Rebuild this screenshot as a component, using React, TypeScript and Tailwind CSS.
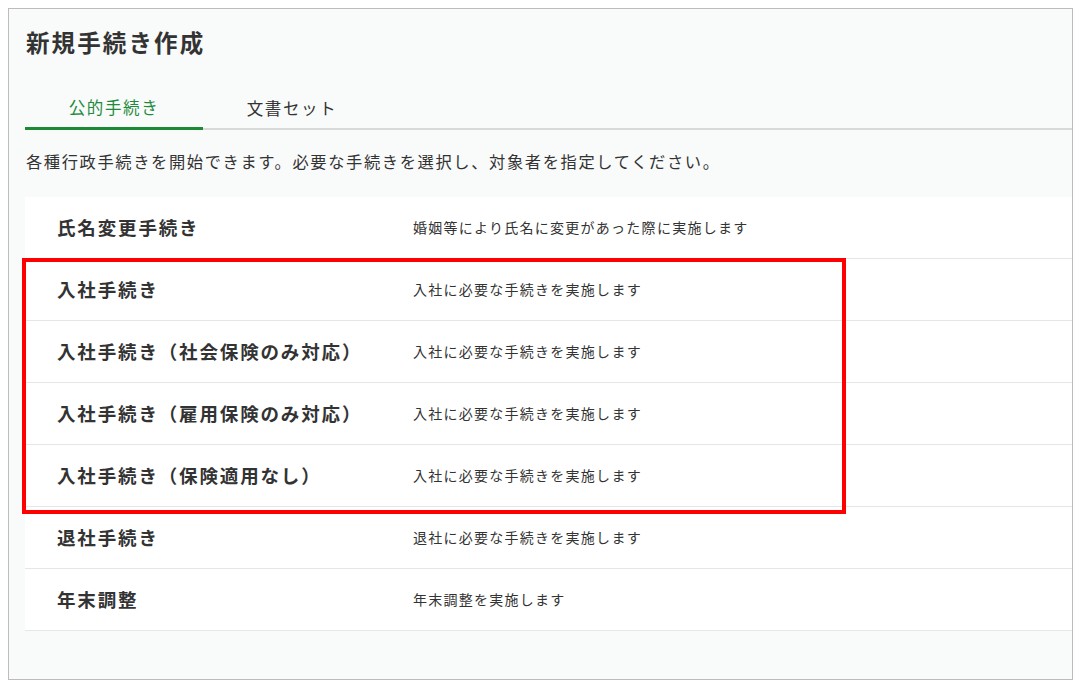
const procedures = [
  { name: "氏名変更手続き", desc: "婚姻等により氏名に変更があった際に実施します" },
  { name: "入社手続き", desc: "入社に必要な手続きを実施します" },
  { name: "入社手続き（社会保険のみ対応）", desc: "入社に必要な手続きを実施します" },
  { name: "入社手続き（雇用保険のみ対応）", desc: "入社に必要な手続きを実施します" },
  { name: "入社手続き（保険適用なし）", desc: "入社に必要な手続きを実施します" },
  { name: "退社手続き", desc: "退社に必要な手続きを実施します" },
  { name: "年末調整", desc: "年末調整を実施します" },
];

export default function App() {
  return (
    <div
      className="relative min-h-screen bg-white p-2 text-[#333]"
      style={{ fontFamily: '"Noto Sans CJK JP", "Noto Sans", sans-serif' }}
    >
      <div className="h-[672px] w-[1065px] border border-[#bcbcbc] bg-[#f9fafa] pl-4">
        <h1 className="ml-px pt-[17px] text-[23.5px] font-bold leading-[32px] tracking-[0.09em]">
          新規手続き作成
        </h1>

        <div className="mt-[37px] flex border-b-2 border-[#d9d9d9]">
          <button className="-mb-[2px] w-[178px] border-b-[3px] border-[#1a8a35] pb-[8px] text-[16.5px] leading-6 tracking-[0.1em] text-[#1f8a3c]">
            公的手続き
          </button>
          <button className="w-[178px] pb-[8px] text-[16.5px] leading-6 tracking-[0.1em] text-[#333]">
            文書セット
          </button>
        </div>

        <p className="ml-px mt-[19px] text-[16.25px] leading-6 tracking-[0.1em]">
          各種行政手続きを開始できます。必要な手続きを選択し、対象者を指定してください。
        </p>

        <ul className="mt-[24px] bg-white">
          {procedures.map((p) => (
            <li
              key={p.name}
              className="flex h-[62px] items-center border-b border-[#e6e6e6]"
            >
              <span className="w-[388px] pl-[32px] text-[18.5px] font-bold tracking-[0.1em]">
                {p.name}
              </span>
              <span className="text-[14px] tracking-[0.09em]">{p.desc}</span>
            </li>
          ))}
        </ul>
      </div>

      <div className="pointer-events-none absolute left-[22px] top-[258px] h-[256px] w-[824px] border-4 border-[#ff0000]" />
    </div>
  );
}
